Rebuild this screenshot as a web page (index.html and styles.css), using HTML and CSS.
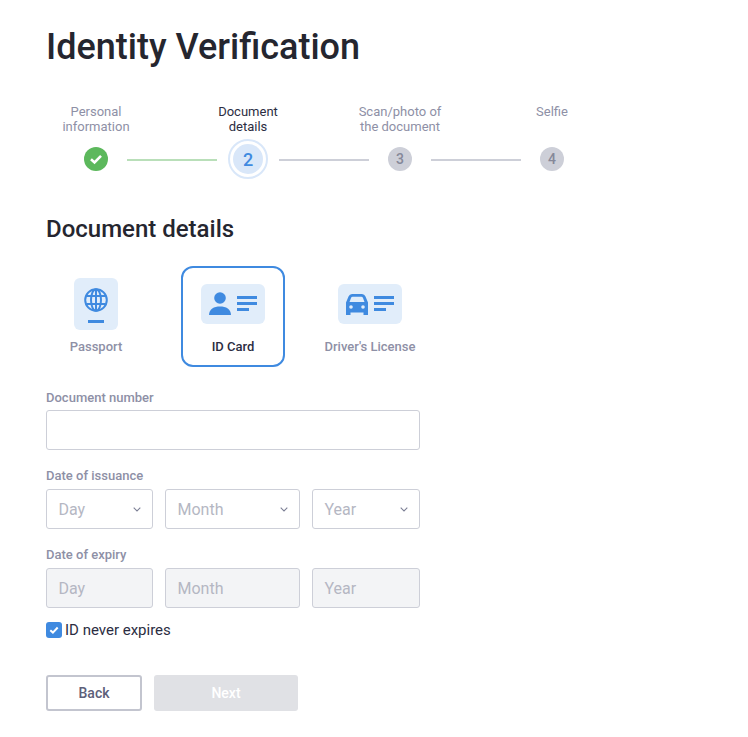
FILE: index.html
```html
<!DOCTYPE html>
<html lang="en">
<head>
<meta charset="utf-8">
<title>Identity Verification</title>
<link rel="stylesheet" href="styles.css">
</head>
<body>
<main class="page">
  <h1 class="title">Identity Verification</h1>

  <section class="stepper">
    <div class="step-labels">
      <div class="step-label">Personal<br>information</div>
      <div class="step-label step-label-active">Document<br>details</div>
      <div class="step-label">Scan/photo of<br>the document</div>
      <div class="step-label">Selfie</div>
    </div>
    <div class="step-track">
      <div class="step-cell">
        <div class="dot dot-done">
          <svg width="16" height="16" viewBox="0 0 16 16"><path d="M3 8.300 6.500 11.500 13 4.800" fill="none" stroke="#fff" stroke-width="2.600"/></svg>
        </div>
      </div>
      <div class="connector connector-done"></div>
      <div class="step-cell">
        <div class="dot-ring"><div class="dot-current">2</div></div>
      </div>
      <div class="connector"></div>
      <div class="step-cell"><div class="dot">3</div></div>
      <div class="connector"></div>
      <div class="step-cell"><div class="dot">4</div></div>
    </div>
  </section>

  <h2 class="subtitle">Document details</h2>

  <div class="form">
    <div class="doc-types">
      <div class="doc-card doc-card-passport">
        <div class="doc-icon">
          <svg width="44" height="52" viewBox="0 0 44 52">
            <rect width="44" height="52" rx="6" fill="#e1edfa"/>
            <g fill="none" stroke="#3f8ae0" stroke-width="2">
              <circle cx="22" cy="22" r="10.800"/>
              <ellipse cx="22" cy="22" rx="5" ry="10.800"/>
              <path d="M22 11V33M12.300 18H31.700M12.300 26H31.700"/>
            </g>
            <rect x="14" y="42" width="16" height="3" fill="#3f8ae0"/>
          </svg>
        </div>
        <div class="doc-name">Passport</div>
      </div>
      <div class="doc-card doc-card-active">
        <div class="doc-icon">
          <svg width="64" height="40" viewBox="0 0 64 40">
            <rect width="64" height="40" rx="6" fill="#e1edfa"/>
            <circle cx="19" cy="14" r="5.800" fill="#3f8ae0"/>
            <path d="M8 31c0-6 5-8.500 11-8.500S30 25 30 31z" fill="#3f8ae0"/>
            <path d="M36 12h20v3H36zM36 18h20v3H36zM36 24h12v3H36z" fill="#3f8ae0"/>
          </svg>
        </div>
        <div class="doc-name doc-name-active">ID Card</div>
      </div>
      <div class="doc-card">
        <div class="doc-icon">
          <svg width="64" height="40" viewBox="0 0 64 40">
            <rect width="64" height="40" rx="6" fill="#e1edfa"/>
            <path d="M8 31V18.500l2.500-6Q11.500 10 14 10h10q2.500 0 3.500 2.500l2.500 6V31h-4.500v-2.500h-13V31z" fill="#3f8ae0"/>
            <path d="M11.500 18l1.500-4q.4-1.200 1.700-1.200h8.600q1.300 0 1.700 1.200l1.500 4z" fill="#e1edfa"/>
            <circle cx="13" cy="23" r="1.800" fill="#e1edfa"/>
            <circle cx="25" cy="23" r="1.800" fill="#e1edfa"/>
            <path d="M36 12h20v3H36zM36 18h20v3H36zM36 24h12v3H36z" fill="#3f8ae0"/>
          </svg>
        </div>
        <div class="doc-name">Driver's License</div>
      </div>
    </div>

    <label class="field-label field-label-first" for="docnum">Document number</label>
    <input class="text-input" id="docnum" type="text">

    <div class="field-label">Date of issuance</div>
    <div class="date-row">
      <div class="date-box">Day<svg width="8" height="5" viewBox="0 0 8 5"><path d="M.7.7 4 4 7.300.7" fill="none" stroke="#7d8096" stroke-width="1.100"/></svg></div>
      <div class="date-box">Month<svg width="8" height="5" viewBox="0 0 8 5"><path d="M.7.7 4 4 7.300.7" fill="none" stroke="#7d8096" stroke-width="1.100"/></svg></div>
      <div class="date-box">Year<svg width="8" height="5" viewBox="0 0 8 5"><path d="M.7.7 4 4 7.300.7" fill="none" stroke="#7d8096" stroke-width="1.100"/></svg></div>
    </div>

    <div class="field-label">Date of expiry</div>
    <div class="date-row">
      <div class="date-box date-box-disabled">Day</div>
      <div class="date-box date-box-disabled">Month</div>
      <div class="date-box date-box-disabled">Year</div>
    </div>

    <div class="never-expires">
      <span class="check">
        <svg width="12" height="12" viewBox="0 0 12 12"><path d="M2.300 6.200 4.900 8.600 9.700 3.500" fill="none" stroke="#fff" stroke-width="2"/></svg>
      </span>
      <span>ID never expires</span>
    </div>

    <div class="actions">
      <button class="btn btn-back" type="button">Back</button>
      <button class="btn btn-next" type="button">Next</button>
    </div>
  </div>
</main>
</body>
</html>
```

FILE: styles.css
```css
* { box-sizing: border-box; }

html, body { margin: 0; padding: 0; background: #fff; }

body {
  font-family: Roboto, "Liberation Sans", sans-serif;
  color: #22243a;
}

.page { padding: 26px 46px 0; }

.title {
  margin: 0;
  font-size: 36px;
  line-height: 42px;
  font-weight: 500;
  color: #25262f;
}

.stepper { margin-top: 36px; }

.step-labels {
  display: grid;
  grid-template-columns: repeat(4, 100px);
  column-gap: 52px;
}

.step-label {
  font-size: 13px;
  line-height: 15px;
  text-align: center;
  color: #8e90a6;
}

.step-label-active { color: #2b2d42; }

.step-track {
  display: flex;
  align-items: center;
  margin: 5px 0 0 19px;
  height: 40px;
}

.step-cell {
  width: 62px;
  display: flex;
  justify-content: center;
}

.connector {
  width: 90px;
  height: 2px;
  margin-top: 2px;
  background: #cdcfd8;
}

.connector-done { background: #b9dfb9; }

.dot {
  width: 24px;
  height: 24px;
  border-radius: 50%;
  background: #cdcfd8;
  color: #858899;
  font-size: 14px;
  font-weight: 500;
  display: flex;
  align-items: center;
  justify-content: center;
}

.dot-done { background: #5cb85c; }

.dot-ring {
  width: 40px;
  height: 40px;
  border-radius: 50%;
  border: 2px solid #d9e7f9;
  padding: 3px;
}

.dot-current {
  width: 30px;
  height: 30px;
  border-radius: 50%;
  background: #d9e7f9;
  color: #3f8ae0;
  font-size: 18px;
  font-weight: 500;
  display: flex;
  align-items: center;
  justify-content: center;
}

.subtitle {
  margin: 35px 0 0;
  font-size: 24px;
  line-height: 30px;
  font-weight: 500;
  color: #25262f;
}

.form { width: 374px; }

.doc-types {
  display: flex;
  justify-content: space-between;
  margin-top: 22px;
}

.doc-card {
  width: 100px;
  height: 101px;
  display: flex;
  flex-direction: column;
  align-items: center;
  justify-content: space-between;
  padding: 18px 0 13px;
}

.doc-card-passport { padding-top: 12px; }

.doc-card-active {
  width: 104px;
  border: 2px solid #3f8ae0;
  border-radius: 12px;
  padding: 16px 0 11px;
}

.doc-icon { display: flex; }

.doc-name {
  font-size: 13px;
  line-height: 15px;
  font-weight: 500;
  color: #8e90a6;
  white-space: nowrap;
}

.doc-name-active { color: #2b2d42; }

.field-label {
  display: block;
  margin: 18px 0 6px;
  font-size: 13px;
  line-height: 15px;
  font-weight: 500;
  color: #8e90a6;
}

.field-label-first { margin: 23px 0 5px; }

.text-input {
  display: block;
  width: 100%;
  height: 40px;
  border: 1px solid #cdcfd8;
  border-radius: 3px;
  background: #fff;
  outline: none;
}

.date-row {
  display: grid;
  grid-template-columns: 107px 135px 108px;
  column-gap: 12px;
}

.date-box {
  height: 40px;
  padding: 0 11.500px;
  border: 1px solid #cdcfd8;
  border-radius: 3px;
  display: flex;
  align-items: center;
  justify-content: space-between;
  font-size: 16px;
  color: #b5b7c3;
}

.date-box-disabled { background: #f3f4f6; }

.never-expires {
  display: flex;
  align-items: center;
  gap: 3px;
  margin-top: 13px;
  font-size: 15px;
  line-height: 18px;
  color: #2b2d42;
}

.check {
  width: 16px;
  height: 16px;
  border-radius: 3px;
  background: #3f8ae0;
  display: flex;
  align-items: center;
  justify-content: center;
}

.actions {
  display: flex;
  gap: 12px;
  margin-top: 36px;
}

.btn {
  height: 36px;
  padding: 0;
  border-radius: 3px;
  font-family: inherit;
  font-size: 14px;
  font-weight: 500;
}

.btn-back {
  width: 96px;
  background: #fff;
  border: 2px solid #c3c5cf;
  color: #5d6079;
}

.btn-next {
  width: 144px;
  background: #e0e1e5;
  border: 0;
  color: #fff;
}
```
